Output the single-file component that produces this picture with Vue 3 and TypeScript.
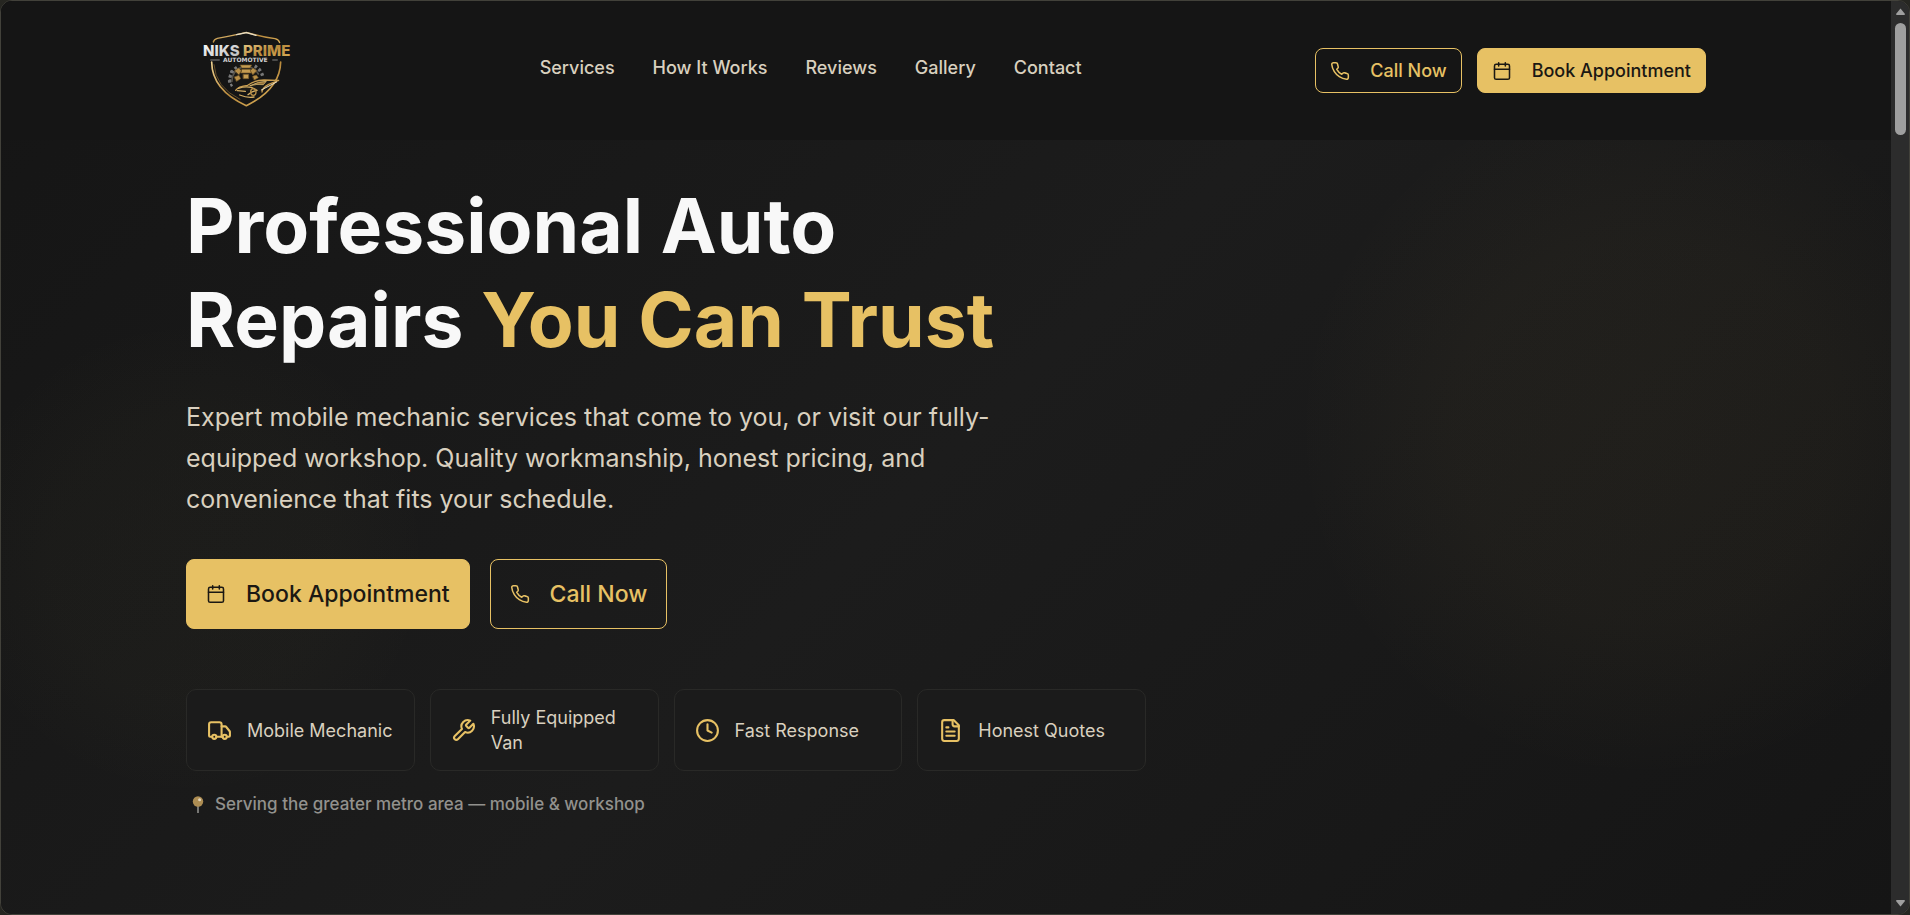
<script setup lang="ts">
interface NavItem {
  label: string
  href: string
}

interface Feature {
  label: string
  icon: 'truck' | 'wrench' | 'clock' | 'file'
}

const navItems: NavItem[] = [
  { label: 'Services', href: '#services' },
  { label: 'How It Works', href: '#how-it-works' },
  { label: 'Reviews', href: '#reviews' },
  { label: 'Gallery', href: '#gallery' },
  { label: 'Contact', href: '#contact' },
]

const features: Feature[] = [
  { label: 'Mobile Mechanic', icon: 'truck' },
  { label: 'Fully Equipped Van', icon: 'wrench' },
  { label: 'Fast Response', icon: 'clock' },
  { label: 'Honest Quotes', icon: 'file' },
]

const iconPaths: Record<string, string[]> = {
  truck: [
    'M14 18V6a2 2 0 0 0-2-2H4a2 2 0 0 0-2 2v11a1 1 0 0 0 1 1h2',
    'M15 18H9',
    'M19 18h2a1 1 0 0 0 1-1v-3.65a1 1 0 0 0-.22-.624l-3.48-4.35A1 1 0 0 0 17.52 8H14',
    'M19 18a2 2 0 1 1-4 0a2 2 0 0 1 4 0z',
    'M9 18a2 2 0 1 1-4 0a2 2 0 0 1 4 0z',
  ],
  wrench: [
    'M14.7 6.3a1 1 0 0 0 0 1.4l1.6 1.6a1 1 0 0 0 1.4 0l3.77-3.77a6 6 0 0 1-7.94 7.94l-6.91 6.91a2.12 2.12 0 0 1-3-3l6.91-6.91a6 6 0 0 1 7.94-7.94l-3.76 3.76z',
  ],
  clock: ['M22 12a10 10 0 1 1-20 0a10 10 0 0 1 20 0z', 'M12 6v6l4 2'],
  file: [
    'M15 2H6a2 2 0 0 0-2 2v16a2 2 0 0 0 2 2h12a2 2 0 0 0 2-2V7Z',
    'M14 2v4a2 2 0 0 0 2 2h4',
    'M10 9H8',
    'M16 13H8',
    'M16 17H8',
  ],
  calendar: [
    'M8 2v4',
    'M16 2v4',
    'M5 4h14a2 2 0 0 1 2 2v14a2 2 0 0 1-2 2H5a2 2 0 0 1-2-2V6a2 2 0 0 1 2-2z',
    'M3 10h18',
  ],
  phone: [
    'M22 16.92v3a2 2 0 0 1-2.18 2 19.79 19.79 0 0 1-8.63-3.07 19.5 19.5 0 0 1-6-6 19.79 19.79 0 0 1-3.07-8.67A2 2 0 0 1 4.11 2h3a2 2 0 0 1 2 1.72 12.84 12.84 0 0 0 .7 2.81 2 2 0 0 1-.45 2.11L8.09 9.91a16 16 0 0 0 6 6l1.27-1.27a2 2 0 0 1 2.11-.45 12.84 12.84 0 0 0 2.81.7A2 2 0 0 1 22 16.92z',
  ],
}
</script>

<template>
  <div class="window">
    <div class="page">
      <header class="header">
        <div class="container header-row">
          <a class="logo" href="#home" aria-label="Niks Prime Automotive">
            <svg viewBox="0 0 120 80" width="120" height="80">
              <defs>
                <linearGradient id="gold" x1="0" y1="0" x2="1" y2="1">
                  <stop offset="0" stop-color="#f0d391" />
                  <stop offset="0.5" stop-color="#b98a3c" />
                  <stop offset="1" stop-color="#dcb15c" />
                </linearGradient>
                <linearGradient id="silver" x1="0" y1="0" x2="1" y2="1">
                  <stop offset="0" stop-color="#ffffff" />
                  <stop offset="1" stop-color="#b5b5b5" />
                </linearGradient>
              </defs>
              <g transform="translate(4 -8) scale(0.33333)" fill="none" stroke-linecap="round" stroke-linejoin="round">
                <path d="M70 66Q72 58 82 55Q132 46 169 37Q212 50 255 56Q266 58 269 68" stroke="url(#gold)" stroke-width="4" />
                <path d="M140 44Q156 41 169 38Q182 42 198 46" stroke="#e6dcc4" stroke-width="4" />
                <path d="M65 126Q66 210 169 257Q270 208 272 126" stroke="url(#gold)" stroke-width="5" />
                <path d="M72 134Q76 202 150 238" stroke="#8b6a33" stroke-width="2" />
                <path d="M126 199A48 48 0 0 1 126 151" stroke="#7c7c7c" stroke-width="7" stroke-dasharray="8 6" stroke-linecap="butt" />
                <path d="M119 188A50 50 0 0 1 146 139M194 138A50 50 0 0 1 219 172" stroke="#777777" stroke-width="10" stroke-dasharray="8 7" stroke-linecap="butt" />
                <path d="M126 184A42 42 0 0 1 205 162" stroke="#57534b" stroke-width="5" />
                <path d="M151 135h34l-5 9h-24zM156 148h25l3 11h-31zM160 163h16v13h-16z" fill="#c59c51" stroke="#6f5425" stroke-width="2" />
                <path d="M134 152l12-8 8 8-7 12zM200 152l-11-8-8 8 7 12zM133 171l14-5 5 10-12 8zM188 169l11-4 6 8-12 7z" fill="#b88f48" stroke="#705425" stroke-width="2" />
                <path d="M137 211Q144 199 173 196Q195 180 222 180L266 181L236 193Q217 203 216 216" fill="#1b1a17" stroke="#c79c50" stroke-width="4" />
                <path d="M180 197Q205 184 229 184L220 194Q202 191 180 197z" fill="#947036" stroke="#e8c77b" stroke-width="2" />
                <path d="M145 205Q164 198 184 202L201 211Q184 214 174 224M142 212l24 2M149 225Q173 235 192 231" stroke="#d4ae64" stroke-width="4" />
                <ellipse cx="190" cy="216" rx="8" ry="10" stroke="#b88f48" stroke-width="4" />
                <path d="M214 210L260 186" stroke="#eee2c6" stroke-width="3" />
                <path d="M62 120H88M248 120H262" stroke="#bbbbbb" stroke-width="2" />
              </g>
              <text x="17" y="28" class="logo-name" fill="url(#silver)">NIKS</text>
              <text x="57" y="28" class="logo-name" fill="url(#gold)">PRIME</text>
              <text x="37" y="34" class="logo-sub" fill="#d0d0d0">AUTOMOTIVE</text>
            </svg>
          </a>

          <nav class="nav" aria-label="Main">
            <a v-for="item in navItems" :key="item.label" :href="item.href">{{ item.label }}</a>
          </nav>

          <div class="header-actions">
            <button type="button" class="btn btn-outline">
              <svg class="icon" viewBox="0 0 24 24"><path v-for="d in iconPaths.phone" :key="d" :d="d" /></svg>
              Call Now
            </button>
            <button type="button" class="btn btn-solid">
              <svg class="icon" viewBox="0 0 24 24"><path v-for="d in iconPaths.calendar" :key="d" :d="d" /></svg>
              Book Appointment
            </button>
          </div>
        </div>
      </header>

      <main class="container hero">
        <h1>Professional Auto Repairs <span>You Can Trust</span></h1>
        <p class="lead">
          Expert mobile mechanic services that come to you, or visit our fully-equipped workshop. Quality workmanship,
          honest pricing, and convenience that fits your schedule.
        </p>
        <div class="hero-actions">
          <button type="button" class="btn btn-large btn-solid">
            <svg class="icon" viewBox="0 0 24 24"><path v-for="d in iconPaths.calendar" :key="d" :d="d" /></svg>
            Book Appointment
          </button>
          <button type="button" class="btn btn-large btn-outline">
            <svg class="icon" viewBox="0 0 24 24"><path v-for="d in iconPaths.phone" :key="d" :d="d" /></svg>
            Call Now
          </button>
        </div>
        <ul class="features">
          <li v-for="feature in features" :key="feature.label">
            <svg class="feature-icon" viewBox="0 0 24 24">
              <path v-for="d in iconPaths[feature.icon]" :key="d" :d="d" />
            </svg>
            <span>{{ feature.label }}</span>
          </li>
        </ul>
        <p class="area">
          <svg class="pin" viewBox="0 0 12 18" width="12" height="18">
            <path d="M6 10V17" stroke="#a0a09c" stroke-width="1.4" />
            <circle cx="6" cy="5.5" r="5.2" fill="#ad8d53" />
            <circle cx="7.6" cy="3.8" r="1.5" fill="#e2d5bc" />
          </svg>
          Serving the greater metro area — mobile &amp; workshop
        </p>
      </main>
    </div>

    <div class="scrollbar" aria-hidden="true">
      <svg width="9" height="7" viewBox="0 0 9 7"><path d="M4.5 0.5L9 6Q9 7 8 7H1Q0 7 0 6z" /></svg>
      <div class="track"><div class="thumb"></div></div>
      <svg width="9" height="7" viewBox="0 0 9 7"><path d="M4.5 6.5L9 1Q9 0 8 0H1Q0 0 0 1z" /></svg>
    </div>
  </div>
</template>

<style>
body {
  margin: 0;
  background: #262621;
}
</style>

<style scoped>
* {
  box-sizing: border-box;
}

.window {
  display: flex;
  min-height: 100vh;
  overflow: hidden;
  border: 1px solid #42413a;
  border-radius: 12px;
  background: #161616;
  font-family: Inter, 'Liberation Sans', sans-serif;
  color: #d9d0bf;
}

.page {
  flex: 1;
  min-width: 0;
  background:
    radial-gradient(circle at 87% 47%, rgba(231, 193, 100, 0.04) 0, rgba(231, 193, 100, 0.03) 190px, rgba(220, 200, 100, 0) 350px),
    radial-gradient(circle at 10% 61%, rgba(200, 193, 100, 0.022) 0, rgba(200, 193, 100, 0.018) 140px, rgba(200, 193, 100, 0) 240px),
    linear-gradient(135deg, #151515 0%, #1c1c1c 50%, #151515 100%);
}

.container {
  width: 100%;
  max-width: 1600px;
  margin: 0 auto;
  padding: 0 40px;
}

.header {
  background: rgba(21, 21, 21, 0.95);
}

.header-row {
  display: flex;
  align-items: center;
  justify-content: space-between;
  height: 139px;
  padding-bottom: 6px;
}

.logo,
.logo svg {
  display: block;
}

.logo-name {
  font: 800 15px Inter, sans-serif;
}

.logo-sub {
  font: 700 6px 'DejaVu Sans', sans-serif;
}

.nav {
  display: flex;
  gap: 38px;
}

.nav a {
  font-size: 18px;
  font-weight: 500;
  line-height: 24px;
  color: #d9d0bf;
  text-decoration: none;
}

.header-actions {
  display: flex;
  gap: 15px;
  padding-top: 6px;
}

.btn {
  display: flex;
  align-items: center;
  gap: 20px;
  height: 45px;
  padding: 0 14px;
  border: 1px solid #e7c164;
  border-radius: 8px;
  font-family: inherit;
  font-size: 18px;
  font-weight: 500;
  white-space: nowrap;
  cursor: pointer;
}

.btn-outline {
  background: transparent;
  color: #e7c164;
}

.btn-solid {
  background: #e7c164;
  color: #1b1813;
}

.btn-large {
  height: 70px;
  padding: 0 19px;
  font-size: 23px;
}

.icon,
.feature-icon {
  flex: none;
  fill: none;
  stroke: currentColor;
  stroke-linecap: round;
  stroke-linejoin: round;
}

.icon {
  width: 20px;
  height: 20px;
  stroke-width: 1.85;
}

.hero {
  padding-top: 39px;
  padding-bottom: 39px;
}

h1 {
  max-width: 880px;
  margin: 0;
  font-size: 75px;
  font-weight: 700;
  line-height: 94px;
  color: #f8f8f8;
}

h1 span {
  color: #e7c164;
}

.lead {
  max-width: 840px;
  margin: 30px 0 0;
  font-size: 25px;
  line-height: 41px;
}

.hero-actions {
  display: flex;
  gap: 20px;
  margin-top: 39px;
}

.features {
  display: grid;
  grid-template-columns: repeat(4, 1fr);
  gap: 15px;
  max-width: 960px;
  margin: 60px 0 0;
  padding: 0;
  list-style: none;
}

.features li {
  display: flex;
  align-items: center;
  gap: 15px;
  min-height: 82px;
  padding: 15px 20px;
  border: 1px solid #292927;
  border-radius: 10px;
  background: #1b1b1b;
  font-size: 18px;
  line-height: 25px;
}

.feature-icon {
  width: 25px;
  height: 25px;
  stroke-width: 2;
  color: #e7c164;
}

.area {
  display: flex;
  align-items: center;
  gap: 11px;
  margin: 21px 0 0;
  padding-left: 6px;
  font-size: 17px;
  font-weight: 500;
  line-height: 25px;
  color: #92918d;
}

.scrollbar {
  display: flex;
  flex-direction: column;
  align-items: center;
  gap: 8px;
  width: 18px;
  padding: 7px 0;
  background: #2c2c2c;
}

.scrollbar svg {
  fill: #9f9f9f;
}

.track {
  flex: 1;
}

.thumb {
  width: 11px;
  height: 112px;
  border-radius: 6px;
  background: #9f9f9f;
}
</style>
